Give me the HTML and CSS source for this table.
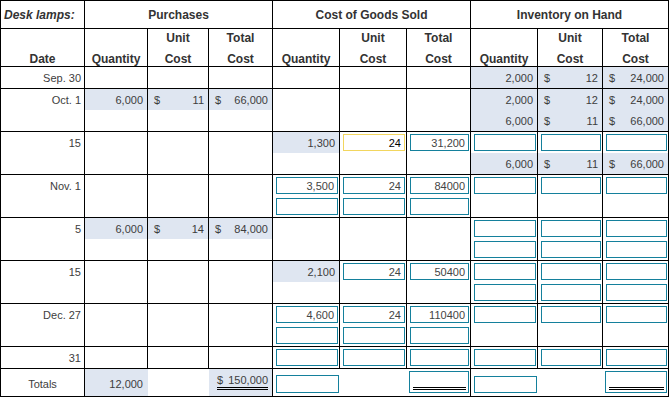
FILE: index.html
```html
<!DOCTYPE html>
<html lang="en">
<head>
  <meta charset="UTF-8" />
  <title>Desk lamps – perpetual inventory</title>
  <link rel="stylesheet" href="styles.css">
</head>
<body>
<div class="sheet">
  <!-- group headings -->
  <div class="c h1 title">Desk lamps:</div>
  <div class="c h1 span3">Purchases</div>
  <div class="c h1 span3">Cost of Goods Sold</div>
  <div class="c h1 span3">Inventory on Hand</div>

  <!-- column headings -->
  <div class="c h2"><span>Date</span></div>
  <div class="c h2"><span>Quantity</span></div>
  <div class="c h2"><span>Unit</span><span>Cost</span></div>
  <div class="c h2"><span>Total</span><span>Cost</span></div>
  <div class="c h2"><span>Quantity</span></div>
  <div class="c h2"><span>Unit</span><span>Cost</span></div>
  <div class="c h2"><span>Total</span><span>Cost</span></div>
  <div class="c h2"><span>Quantity</span></div>
  <div class="c h2"><span>Unit</span><span>Cost</span></div>
  <div class="c h2"><span>Total</span><span>Cost</span></div>

  <!-- Sep. 30 -->
  <div class="c date"><div class="ln">Sep. 30</div></div>
  <div class="c"></div>
  <div class="c"></div>
  <div class="c"></div>
  <div class="c"></div>
  <div class="c"></div>
  <div class="c"></div>
  <div class="c"><div class="ln sh">2,000</div></div>
  <div class="c"><div class="ln sh m"><span>$</span><span>12</span></div></div>
  <div class="c"><div class="ln sh m"><span>$</span><span>24,000</span></div></div>

  <!-- Oct. 1 -->
  <div class="c date"><div class="ln">Oct. 1</div></div>
  <div class="c"><div class="ln sh">6,000</div></div>
  <div class="c"><div class="ln sh m"><span>$</span><span>11</span></div></div>
  <div class="c"><div class="ln sh m"><span>$</span><span>66,000</span></div></div>
  <div class="c"></div>
  <div class="c"></div>
  <div class="c"></div>
  <div class="c"><div class="ln sh">2,000</div><div class="ln sh">6,000</div></div>
  <div class="c"><div class="ln sh m"><span>$</span><span>12</span></div><div class="ln sh m"><span>$</span><span>11</span></div></div>
  <div class="c"><div class="ln sh m"><span>$</span><span>24,000</span></div><div class="ln sh m"><span>$</span><span>66,000</span></div></div>

  <!-- 15 -->
  <div class="c date"><div class="ln">15</div></div>
  <div class="c"></div>
  <div class="c"></div>
  <div class="c"></div>
  <div class="c"><div class="ln sh">1,300</div></div>
  <div class="c"><div class="ln f"><div class="box hot">24</div></div></div>
  <div class="c"><div class="ln f"><div class="box">31,200</div></div></div>
  <div class="c"><div class="ln f"><div class="box"></div></div><div class="ln sh">6,000</div></div>
  <div class="c"><div class="ln f"><div class="box"></div></div><div class="ln sh m"><span>$</span><span>11</span></div></div>
  <div class="c"><div class="ln f"><div class="box"></div></div><div class="ln sh m"><span>$</span><span>66,000</span></div></div>

  <!-- Nov. 1 -->
  <div class="c date"><div class="ln">Nov. 1</div></div>
  <div class="c"></div>
  <div class="c"></div>
  <div class="c"></div>
  <div class="c"><div class="ln f"><div class="box">3,500</div></div><div class="ln f"><div class="box"></div></div></div>
  <div class="c"><div class="ln f"><div class="box">24</div></div><div class="ln f"><div class="box"></div></div></div>
  <div class="c"><div class="ln f"><div class="box">84000</div></div><div class="ln f"><div class="box"></div></div></div>
  <div class="c"><div class="ln f"><div class="box"></div></div></div>
  <div class="c"><div class="ln f"><div class="box"></div></div></div>
  <div class="c"><div class="ln f"><div class="box"></div></div></div>

  <!-- 5 -->
  <div class="c date"><div class="ln">5</div></div>
  <div class="c"><div class="ln sh">6,000</div></div>
  <div class="c"><div class="ln sh m"><span>$</span><span>14</span></div></div>
  <div class="c"><div class="ln sh m"><span>$</span><span>84,000</span></div></div>
  <div class="c"></div>
  <div class="c"></div>
  <div class="c"></div>
  <div class="c"><div class="ln f"><div class="box"></div></div><div class="ln f"><div class="box"></div></div></div>
  <div class="c"><div class="ln f"><div class="box"></div></div><div class="ln f"><div class="box"></div></div></div>
  <div class="c"><div class="ln f"><div class="box"></div></div><div class="ln f"><div class="box"></div></div></div>

  <!-- 15 -->
  <div class="c date"><div class="ln">15</div></div>
  <div class="c"></div>
  <div class="c"></div>
  <div class="c"></div>
  <div class="c"><div class="ln sh">2,100</div></div>
  <div class="c"><div class="ln f"><div class="box">24</div></div></div>
  <div class="c"><div class="ln f"><div class="box">50400</div></div></div>
  <div class="c"><div class="ln f"><div class="box"></div></div><div class="ln f"><div class="box"></div></div></div>
  <div class="c"><div class="ln f"><div class="box"></div></div><div class="ln f"><div class="box"></div></div></div>
  <div class="c"><div class="ln f"><div class="box"></div></div><div class="ln f"><div class="box"></div></div></div>

  <!-- Dec. 27 -->
  <div class="c date"><div class="ln">Dec. 27</div></div>
  <div class="c"></div>
  <div class="c"></div>
  <div class="c"></div>
  <div class="c"><div class="ln f"><div class="box">4,600</div></div><div class="ln f"><div class="box"></div></div></div>
  <div class="c"><div class="ln f"><div class="box">24</div></div><div class="ln f"><div class="box"></div></div></div>
  <div class="c"><div class="ln f"><div class="box">110400</div></div><div class="ln f"><div class="box"></div></div></div>
  <div class="c"><div class="ln f"><div class="box"></div></div></div>
  <div class="c"><div class="ln f"><div class="box"></div></div></div>
  <div class="c"><div class="ln f"><div class="box"></div></div></div>

  <!-- 31 -->
  <div class="c date"><div class="ln">31</div></div>
  <div class="c"></div>
  <div class="c"></div>
  <div class="c"></div>
  <div class="c"><div class="ln f"><div class="box"></div></div></div>
  <div class="c"><div class="ln f"><div class="box"></div></div></div>
  <div class="c"><div class="ln f"><div class="box"></div></div></div>
  <div class="c"><div class="ln f"><div class="box"></div></div></div>
  <div class="c"><div class="ln f"><div class="box"></div></div></div>
  <div class="c"><div class="ln f"><div class="box"></div></div></div>

  <!-- Totals -->
  <div class="c tot tot-date">Totals</div>
  <div class="c nr tot tot-num sh">12,000</div>
  <div class="c nr tot"></div>
  <div class="c tot tot-sum sh"><span class="dbl-text">$ 150,000</span></div>
  <div class="c nr tot tot-f q1"><div class="box"></div></div>
  <div class="c nr tot"></div>
  <div class="c tot tot-f"><div class="box tall"><div class="dbl"></div></div></div>
  <div class="c nr tot tot-f q2"><div class="box"></div></div>
  <div class="c nr tot"></div>
  <div class="c tot tot-f"><div class="box tall"><div class="dbl"></div></div></div>
</div>
</body>
</html>
```

FILE: styles.css
```css
* {
  box-sizing: border-box;
}
body {
  margin: 0;
  font-family: "Liberation Sans", Arial, sans-serif;
  font-size: 11px;
  color: #3d3d3d;
  background: #fff;
}
.sheet {
  display: grid;
  grid-template-columns: 84px 63px 61px 64px 67px 67px 64px 67px 65px 66px;
  width: max-content;
  border-top: 1px solid #000;
  border-left: 1px solid #000;
}
.c {
  border-right: 1px solid #000;
  border-bottom: 1px solid #000;
  min-width: 0;
}
.c.nr {
  border-right: 0;
}
.span3 {
  grid-column: span 3;
}

/* headings */
.h1 {
  height: 28px;
  display: flex;
  align-items: center;
  justify-content: center;
  font-size: 12px;
  font-weight: bold;
  color: #333;
}
.h1.title {
  justify-content: flex-start;
  padding-left: 3px;
  font-style: italic;
}
.h2 {
  height: 38px;
  display: flex;
  flex-direction: column;
  justify-content: flex-end;
  align-items: center;
  gap: 7px;
  font-size: 12px;
  font-weight: bold;
  color: #333;
}
.h2 span {
  line-height: 14px;
}

/* body lines */
.ln {
  height: 21px;
  display: flex;
  align-items: center;
  justify-content: flex-end;
  padding: 0 4px;
  white-space: nowrap;
}
.date .ln {
  padding-right: 3px;
}
.sh {
  background: #dfe6f1;
}
.ln.m {
  justify-content: space-between;
  padding-left: 6px;
}
.ln.f {
  padding: 2px 1px 2px 3px;
}
.box {
  flex: 1;
  height: 17px;
  border: 1px solid #14809c;
  display: flex;
  align-items: center;
  justify-content: flex-end;
  padding-right: 3px;
  color: #444;
  background: #fff;
}
.box.hot {
  border-color: #f2d65e;
  color: #000;
}

/* totals row */
.tot {
  height: 28px;
}
.tot-date {
  display: flex;
  align-items: center;
  justify-content: center;
  padding-top: 3px;
}
.tot-num {
  display: flex;
  align-items: center;
  justify-content: flex-end;
  padding: 3px 5px 0 0;
}
.tot-sum {
  display: flex;
  justify-content: flex-end;
  align-items: flex-start;
  padding: 4px 4px 0 0;
}
.dbl-text {
  line-height: 14px;
  word-spacing: 2px;
  border-bottom: 3px double #000;
}
.tot-f {
  display: flex;
  align-items: flex-start;
  padding: 2px 1px 0 2px;
}
.tot-f.q1 {
  padding: 6px 1px 0 3px;
}
.tot-f.q1 .box {
  height: 18px;
}
.tot-f.q2 {
  padding: 7px 1px 0 3px;
}
.box.tall {
  height: 22px;
  flex-direction: column;
  justify-content: flex-end;
  align-items: stretch;
  padding: 0 2px 2px 3px;
}
.dbl {
  height: 3px;
  border-top: 1px solid #000;
  border-bottom: 1px solid #000;
}
```
